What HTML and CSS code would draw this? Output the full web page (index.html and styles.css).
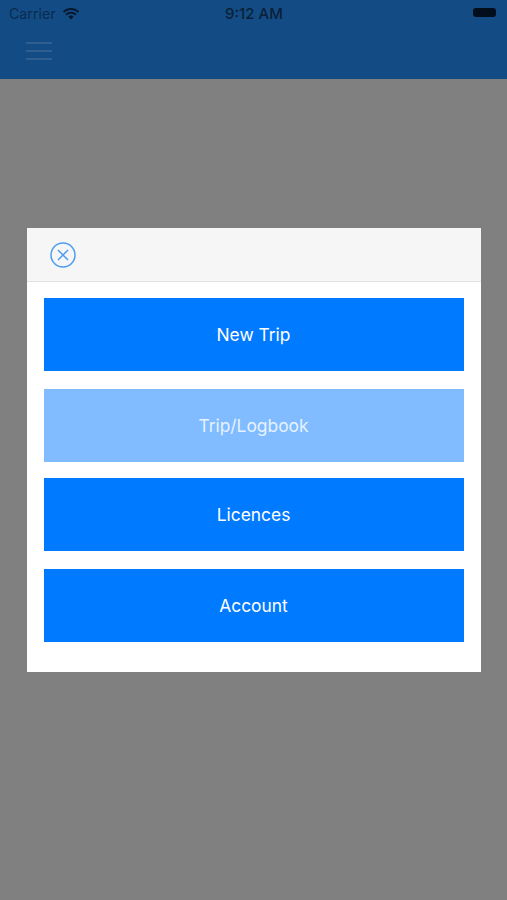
FILE: index.html
```html
<!DOCTYPE html>
<html lang="en">
<head>
  <meta charset="UTF-8" />
  <meta name="viewport" content="width=device-width, initial-scale=1" />
  <title>Menu</title>
  <link rel="stylesheet" href="styles.css">
</head>
<body>
  <header class="topbar">
    <div class="status">
      <div class="status-left">
        <span class="carrier">Carrier</span>
        <svg class="wifi" width="18" height="14" viewBox="0 0 18 13">
          <path d="M9 2.600c2.600 0 5 1 6.800 2.700l1.300-1.500C14.900 1.700 12.100.5 9 .5S3.100 1.700.9 3.800l1.300 1.500C4 3.600 6.400 2.600 9 2.600z"/>
          <path d="M9 6.300c1.600 0 3 .6 4.200 1.600l1.400-1.500C13.100 5 11.100 4.200 9 4.200S4.900 5 3.400 6.400l1.400 1.500C6 6.900 7.400 6.300 9 6.300z"/>
          <path d="M9 8.100c-1 0-1.900.4-2.600 1L9 12l2.600-2.900C10.900 8.500 10 8.100 9 8.100z"/>
        </svg>
      </div>
      <span class="clock">9:12 AM</span>
      <span class="battery"></span>
    </div>
    <div class="menu-icon">
      <span></span>
      <span></span>
      <span></span>
    </div>
  </header>

  <div class="overlay">
    <div class="modal">
      <div class="modal-head">
        <svg class="close" width="26" height="26" viewBox="0 0 26 26">
          <circle cx="13" cy="13" r="12"/>
          <path d="M8 8l10 10M18 8L8 18"/>
        </svg>
      </div>
      <div class="modal-body">
        <button class="btn btn-new">New Trip</button>
        <button class="btn btn-logbook">Trip/Logbook</button>
        <button class="btn btn-licences">Licences</button>
        <button class="btn btn-account">Account</button>
      </div>
    </div>
  </div>
</body>
</html>
```

FILE: styles.css
```css
/* Page */
html, body {
  height: 100%;
}
body {
  margin: 0;
  background: #808080;
  font-family: "Inter", "Liberation Sans", sans-serif;
}

/* Dimmed top bar */
.topbar {
  height: 79px;
  background: #134c84;
  box-sizing: border-box;
}
.status {
  display: grid;
  grid-template-columns: 1fr auto 1fr;
  align-items: center;
  height: 27px;
  padding: 0 9px;
  color: #0a2a50;
  font-size: 14.2px;
}
.status-left {
  display: flex;
  align-items: center;
  gap: 6px;
}
.wifi {
  fill: #05172c;
}
.clock {
  color: #0a1f38;
  font-size: 15px;
  font-weight: 500;
  padding-left: 1px;
}
.battery {
  justify-self: end;
  width: 23px;
  height: 9px;
  margin: 0 2px 2px 0;
  border-radius: 3px;
  background: #030e1c;
}
.menu-icon {
  display: flex;
  flex-direction: column;
  gap: 6px;
  width: 26px;
  margin: 15px 0 0 26px;
}
.menu-icon span {
  height: 2px;
  background: #2f5e8f;
}

/* Modal */
.overlay {
  position: fixed;
  inset: 0;
  display: flex;
  align-items: center;
  justify-content: center;
}
.modal {
  width: 454px;
  height: 444px;
  background: #fff;
  box-sizing: border-box;
}
.modal-head {
  display: flex;
  align-items: center;
  height: 54px;
  padding-left: 23px;
  background: #f6f6f6;
  border-bottom: 1px solid #e2e2e2;
  box-sizing: border-box;
}
.close {
  fill: none;
  stroke: #4b9df3;
  stroke-width: 1.5;
}
.modal-body {
  display: flex;
  flex-direction: column;
  padding: 16px 17px 0;
}
.btn {
  height: 73px;
  border: 0;
  padding: 0;
  background: #007aff;
  color: #fff;
  font-family: inherit;
  font-size: 17.4px;
}
.btn-logbook {
  margin-top: 18px;
  background: #80bcff;
  color: #e6f2ff;
}
.btn-licences {
  margin-top: 16px;
}
.btn-account {
  margin-top: 18px;
}
```
